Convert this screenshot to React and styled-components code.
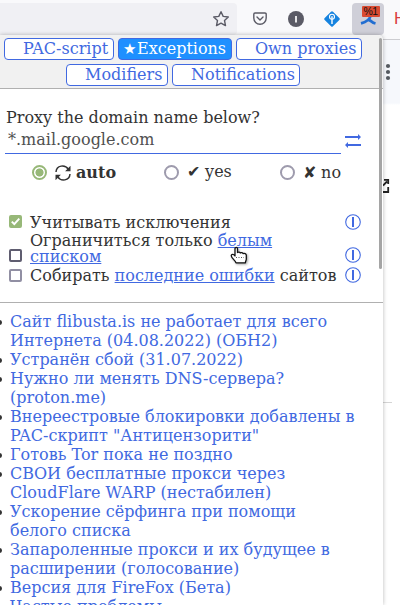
import React from "react";
import styled, { createGlobalStyle } from "styled-components";

const blue = "#4169e1";

const Global = createGlobalStyle`
  *, *::before, *::after { box-sizing: border-box; }
  html, body { margin: 0; height: 605px; overflow: hidden; background: #fff; }
  body { font: 16px/19px "DejaVu Serif", serif; color: #333; }
  svg { display: block; flex: none; }
`;
const Window = styled.div`
  position: relative;
  width: 400px;
  height: 605px;
  overflow: hidden;
`;
const Toolbar = styled.div`
  display: flex;
  height: 40px;
  background: #f9f9fb;
  border-bottom: 1px solid #ccccd0;
`;
const AddressBar = styled.div`
  display: flex;
  flex: none;
  justify-content: flex-end;
  width: 237px;
  height: 32px;
  margin-top: 3px;
  padding: 7px 7px 0 0;
  background: #f0f0f4;
  border-radius: 0 4px 4px 0;
`;
const ToolButton = styled.div`
  display: flex;
  flex: none;
  justify-content: center;
  width: ${(p) => p.$w || 36}px;
  height: 32px;
  margin: 3px 0 0 ${(p) => p.$ml || 0}px;
  padding-top: ${(p) => p.$pt ?? 7}px;
  border-radius: 4px;
  background: ${(p) => (p.$active ? "#cfcfd8" : "transparent")};
`;
const Cropped = styled.div`
  margin: 10px 0 0 10px;
  font: 17px/18px "Liberation Sans", sans-serif;
  color: #d93f3f;
`;
const PageEdge = styled.div`
  display: flex;
  flex-direction: column;
  align-items: flex-start;
  height: 565px;
  padding-left: 383px;
  background: linear-gradient(#f6f8fc 63px, #fff 65px);
`;
const Dots = styled.svg`margin: 23px 0 0 2px;`;
const ExpandIcon = styled.svg`margin: 98px 0 0 0;`;
const PageLine = styled.div`
  width: 9px;
  height: 1px;
  margin-top: 209px;
  background: #d5d5d5;
`;
const Popup = styled.div`
  position: absolute;
  left: 0;
  top: 35px;
  width: 383px;
  height: 570px;
  background: #fff;
  border-radius: 0 5px 0 0;
  box-shadow: 0 0 4px rgba(0, 0, 0, 0.28);
  overflow: hidden;
`;
const ScrollThumb = styled.div`
  position: absolute;
  right: 1px;
  top: 3px;
  width: 3px;
  height: 231px;
  border-radius: 2px;
  background: #a5a5a5;
`;
const Tabs = styled.nav`
  display: flex;
  flex-direction: column;
  gap: 4px;
  height: 54px;
  padding-top: 3px;
  background: #f1f1f1;
  border-bottom: 1px solid #b0b0b0;
`;
const TabRow = styled.div`
  display: flex;
  gap: 4px;
  padding-left: ${(p) => p.$indent}px;
`;
const Tab = styled.div`
  display: flex;
  width: ${(p) => p.$w}px;
  height: 22px;
  padding-left: ${(p) => p.$pad || 18}px;
  border: 1px solid ${blue};
  border-radius: 4px;
  line-height: 20px;
  white-space: nowrap;
  color: ${(p) => (p.$active ? "#fff" : blue)};
  background: ${(p) => (p.$active ? "#1e90ff" : "#fff")};
`;
const Star = styled.span`
  flex: none;
  width: 14px;
  font-size: 15px;
`;
const Proxy = styled.section`
  display: flex;
  flex-direction: column;
  padding: 19px 0 0 5px;
`;
const Question = styled.label`height: 19px; padding-left: 1px;`;
const DomainRow = styled.div`display: flex; height: 27px;`;
const Domain = styled.div`
  width: 336px;
  height: 27px;
  padding: 3px 0 0 3px;
  color: #505050;
  border-bottom: 1px solid ${blue};
`;
const Swap = styled.svg`margin: 7px 0 0 4px;`;
const Choices = styled.div`
  display: grid;
  grid-template-columns: 132px 116px auto;
  height: 46px;
  padding: 9px 0 0 27px;
`;
const Choice = styled.div`
  display: flex;
  align-items: flex-start;
  white-space: pre;
  font-weight: ${(p) => (p.$bold ? "bold" : "normal")};
`;
const Radio = styled.span`
  flex: none;
  width: 15px;
  height: 15px;
  margin: 2px 8px 0 0;
  border: 2px solid ${(p) => (p.$on ? "#97b878" : "#9e9bad")};
  border-radius: 50%;
  background: ${(p) => (p.$on ? "radial-gradient(circle, #97b878 3.7px, #fff 4.4px)" : "#fff")};
`;
const Raised = styled.span`line-height: 17px;`;
const Auto = styled.svg`margin: 2px 5px 0 0;`;
const Options = styled.section`
  height: 103px;
  padding: 13px 0 0 9px;
  border-bottom: 1px solid #b0b0b0;
`;
const Option = styled.div`
  display: grid;
  grid-template-columns: 21px 315px 16px;
  align-items: end;
  height: ${(p) => p.$h}px;
  line-height: ${(p) => p.$lh || 19}px;
  white-space: nowrap;
`;
const Check = styled.span`
  width: 13px;
  height: 13px;
  margin-bottom: ${(p) => p.$mb}px;
  border: 2px solid ${(p) => p.$c};
  border-radius: 2px;
  background: ${(p) => (p.$on ? p.$c : "#fff")};
`;
const Link = styled.a`
  color: ${blue};
  text-decoration: ${(p) => (p.$plain ? "none" : "underline")};
`;
const InfoIcon = styled.svg`margin-bottom: 2px;`;
const News = styled.ul`
  margin: 0;
  padding: 9px 0 0 10px;
  list-style: none;
`;
const NewsItem = styled.li`
  position: relative;
  white-space: pre;
  &::before {
    content: "";
    position: absolute;
    left: -13px;
    top: 8px;
    width: 5px;
    height: 5px;
    border-radius: 50%;
    background: #333;
  }
`;
const Pointer = styled.svg`
  position: absolute;
  left: 230px;
  top: 246px;
  filter: drop-shadow(1px 1px 1px rgba(0, 0, 0, 0.35));
`;

const Info = () => (
  <InfoIcon width="16" height="16" viewBox="0 0 16 16" fill="none" stroke={blue}>
    <circle cx="8" cy="8" r="7.3" strokeWidth="1.1" />
    <path d="M8 3V13" strokeWidth="2" />
  </InfoIcon>
);

const news = [
  "Сайт flibusta.is не работает для всего\nИнтернета (04.08.2022) (ОБН2)",
  "Устранён сбой (31.07.2022)",
  "Нужно ли менять DNS-сервера?\n(proton.me)",
  "Внереестровые блокировки добавлены в\nPAC-скрипт \"Антицензорити\"",
  "Готовь Tor пока не поздно",
  "СВОИ бесплатные прокси через\nCloudFlare WARP (нестабилен)",
  "Ускорение сёрфинга при помощи\nбелого списка",
  "Запароленные прокси и их будущее в\nрасширении (голосование)",
  "Версия для FireFox (Бета)",
  "Частые проблемы",
];

export default function App() {
  return (
    <Window>
      <Global />
      <Toolbar>
        <AddressBar>
          <svg width="18" height="18" viewBox="0 0 18 18" fill="none" stroke="#5b5b66" strokeWidth="1.4" strokeLinejoin="round">
            <path d="M9 1.7l2.2 4.7 5.1.6-3.8 3.5 1 5.1L9 13.1l-4.5 2.5 1-5.1L1.7 7l5.1-.6z" />
          </svg>
        </AddressBar>
        <ToolButton $ml={5} $pt={9}>
          <svg width="14" height="14" viewBox="0 0 14 14" fill="none" stroke="#5b5b66" strokeWidth="1.4" strokeLinecap="round" strokeLinejoin="round">
            <path d="M2 1h10a1.2 1.2 0 0 1 1.2 1.2V6A6.2 6.2 0 0 1 .8 6V2.2A1.2 1.2 0 0 1 2 1zM4 5l3 3 3-3" />
          </svg>
        </ToolButton>
        <ToolButton $pt={8}>
          <svg width="16" height="16" viewBox="0 0 16 16">
            <circle cx="8" cy="8" r="8" fill="#5b5b66" />
            <path d="M8 5v6.4" stroke="#fff" strokeWidth="1.7" />
          </svg>
        </ToolButton>
        <ToolButton $pt={8}>
          <svg width="16" height="16" viewBox="0 0 16 16">
            <path d="M7 .7a1.4 1.4 0 0 1 2 0L15.3 7a1.4 1.4 0 0 1 0 2L9 15.3a1.4 1.4 0 0 1-2 0L.7 9a1.4 1.4 0 0 1 0-2z" fill="#1683df" />
            <circle cx="8" cy="5.8" r="2.5" fill="none" stroke="#fff" strokeWidth="1.1" />
            <path d="M8 5.3V13" stroke="#fff" strokeWidth="1.4" />
          </svg>
        </ToolButton>
        <ToolButton $active $w={32} $ml={2} $pt={3}>
          <svg width="32" height="22" viewBox="0 0 32 22">
            <path d="M18.500 10C17.500 14 14 16 9 17.300M16 13.500c2.500.4 3.500 3 7.500 4" fill="none" stroke="#226ed1" strokeWidth="2.8" />
            <rect x="10" y="0" width="18" height="11" rx="1" fill="#d94b32" />
            <text x="11.5" y="9" fontFamily="Liberation Sans, sans-serif" fontSize="10.5" textLength="14.5" fill="#111">%1</text>
          </svg>
        </ToolButton>
        <Cropped>H</Cropped>
      </Toolbar>
      <PageEdge>
        <Dots width="6" height="18" viewBox="0 0 6 18" fill="#555a60">
          <circle cx="3" cy="3" r="2.1" /><circle cx="3" cy="9" r="2.1" /><circle cx="3" cy="15" r="2.1" />
        </Dots>
        <ExpandIcon width="7" height="14" viewBox="0 0 7 14" fill="none" stroke="#222" strokeWidth="1.8">
          <path d="M1 .9H5.200V5M4 2.500L0 6.500M5.200 8v5H0" />
        </ExpandIcon>
        <PageLine />
      </PageEdge>
      <Popup>
        <Tabs>
          <TabRow $indent={4}>
            <Tab $w={110}>PAC-script</Tab>
            <Tab $w={114} $pad={4} $active><Star>★</Star>Exceptions</Tab>
            <Tab $w={126}>Own proxies</Tab>
          </TabRow>
          <TabRow $indent={66}>
            <Tab $w={102}>Modifiers</Tab>
            <Tab $w={128}>Notifications</Tab>
          </TabRow>
        </Tabs>
        <Proxy>
          <Question>Proxy the domain name below?</Question>
          <DomainRow>
            <Domain>*.mail.google.com</Domain>
            <Swap width="16" height="14" viewBox="0 0 16 14" fill={blue}>
              <path d="M0 2h13V0L16 3l-3 3V4H0zM16 10H3V8L0 11l3 3v-2H16z" />
            </Swap>
          </DomainRow>
          <Choices>
            <Choice $bold>
              <Radio $on />
              <Auto width="16" height="16" viewBox="0 0 16 16" fill="none" stroke="#333" strokeWidth="1.5">
                <path d="M1 7C1.500.2 10-1 13.400 4.400M15 9C14.500 15.800 6 17 2.600 11.600" />
                <path d="M15.500.8v5.400h-5.400zM.5 15.200V9.800h5.400z" fill="#333" stroke="none" />
              </Auto>
              auto
            </Choice>
            <Choice><Radio /><Raised>✔ yes</Raised></Choice>
            <Choice><Radio />✘ no</Choice>
          </Choices>
        </Proxy>
        <Options>
          <Option $h={19}>
            <Check $on $c="#97b878" $mb={4}>
              <svg width="9" height="9" viewBox="0 0 9 9" fill="none" stroke="#fff" strokeWidth="2"><path d="M.8 4.6l2.5 2.5L8.3 1.6" /></svg>
            </Check>
            <span>Учитывать исключения</span>
            <Info />
          </Option>
          <Option $h={33} $lh={16}>
            <Check $c="#5f5d70" $mb={3} />
            <span>Ограничиться только <Link>белым<br />списком</Link></span>
            <Info />
          </Option>
          <Option $h={20}>
            <Check $c="#918fa3" $mb={3} />
            <span>Собирать <Link>последние ошибки</Link> сайтов</span>
            <Info />
          </Option>
        </Options>
        <News>
          {news.map((t) => <NewsItem key={t}><Link $plain>{t}</Link></NewsItem>)}
        </News>
        <ScrollThumb />
      </Popup>
      <Pointer width="18" height="19" viewBox="0 0 18 19" fill="#fff" stroke="#111" strokeWidth="1.3" strokeLinejoin="round">
        <path d="M5 10V2.500C5 1 7.500 1 7.500 2.500V6.500c1-.8 2.500-.5 2.800.5 1-.6 2.300-.3 2.700.6 1.500-.5 3.300 0 3.300 1.700v3.700c0 1.500-.9 2-.9 3.800H6C5 14 1.700 12.500 1.300 10 1 8 3.500 7.800 5 10z" />
        <path d="M6 11.500h8" stroke="#555" strokeWidth="1" strokeDasharray="1 1.500" />
      </Pointer>
    </Window>
  );
}
